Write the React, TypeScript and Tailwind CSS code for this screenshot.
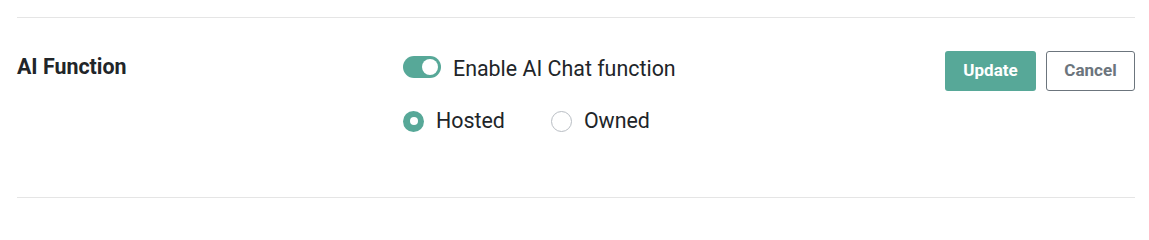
export default function App() {
  return (
    <div
      className="min-h-[207px] bg-white pl-[17px] pr-[14px] pt-[17px] text-[#212529]"
      style={{ fontFamily: 'Roboto, "Liberation Sans", sans-serif' }}
    >
      <div className="flex h-[181px] border-y border-[#e5e5e5]">
        {/* Label */}
        <div className="w-[386px] shrink-0 pt-[37px]">
          <h3 className="text-[21.4px] font-bold leading-[24px]">AI Function</h3>
        </div>

        {/* Options */}
        <div className="flex-1 pt-[37px]">
          <label className="flex items-start gap-[12px]">
            <span className="mt-[1px] flex h-[22px] w-[38px] items-center justify-end rounded-full bg-[#57a898] px-[3px]">
              <span className="h-[16px] w-[16px] rounded-full bg-white" />
            </span>
            <span className="text-[21.4px] leading-[28px]">Enable AI Chat function</span>
          </label>

          <div className="mt-[24px] flex items-center">
            <label className="flex items-center gap-[12px]">
              <span className="flex h-[21px] w-[21px] items-center justify-center rounded-full bg-[#57a898]">
                <span className="h-[8px] w-[8px] rounded-full bg-white" />
              </span>
              <span className="text-[21.4px] leading-[28px]">Hosted</span>
            </label>
            <label className="ml-[46px] flex items-center gap-[12px]">
              <span className="h-[21px] w-[21px] rounded-full border border-[#b8bdc3] bg-white" />
              <span className="text-[21.4px] leading-[28px]">Owned</span>
            </label>
          </div>
        </div>

        {/* Actions */}
        <div className="flex items-start gap-[10px] pt-[33px]">
          <button className="h-[40px] w-[91px] rounded-[3px] bg-[#57a898] text-[17px] font-bold text-white">
            Update
          </button>
          <button className="h-[40px] w-[89px] rounded-[3px] border border-[#6c757d] bg-white text-[17px] font-bold text-[#6c757d]">
            Cancel
          </button>
        </div>
      </div>
    </div>
  );
}
